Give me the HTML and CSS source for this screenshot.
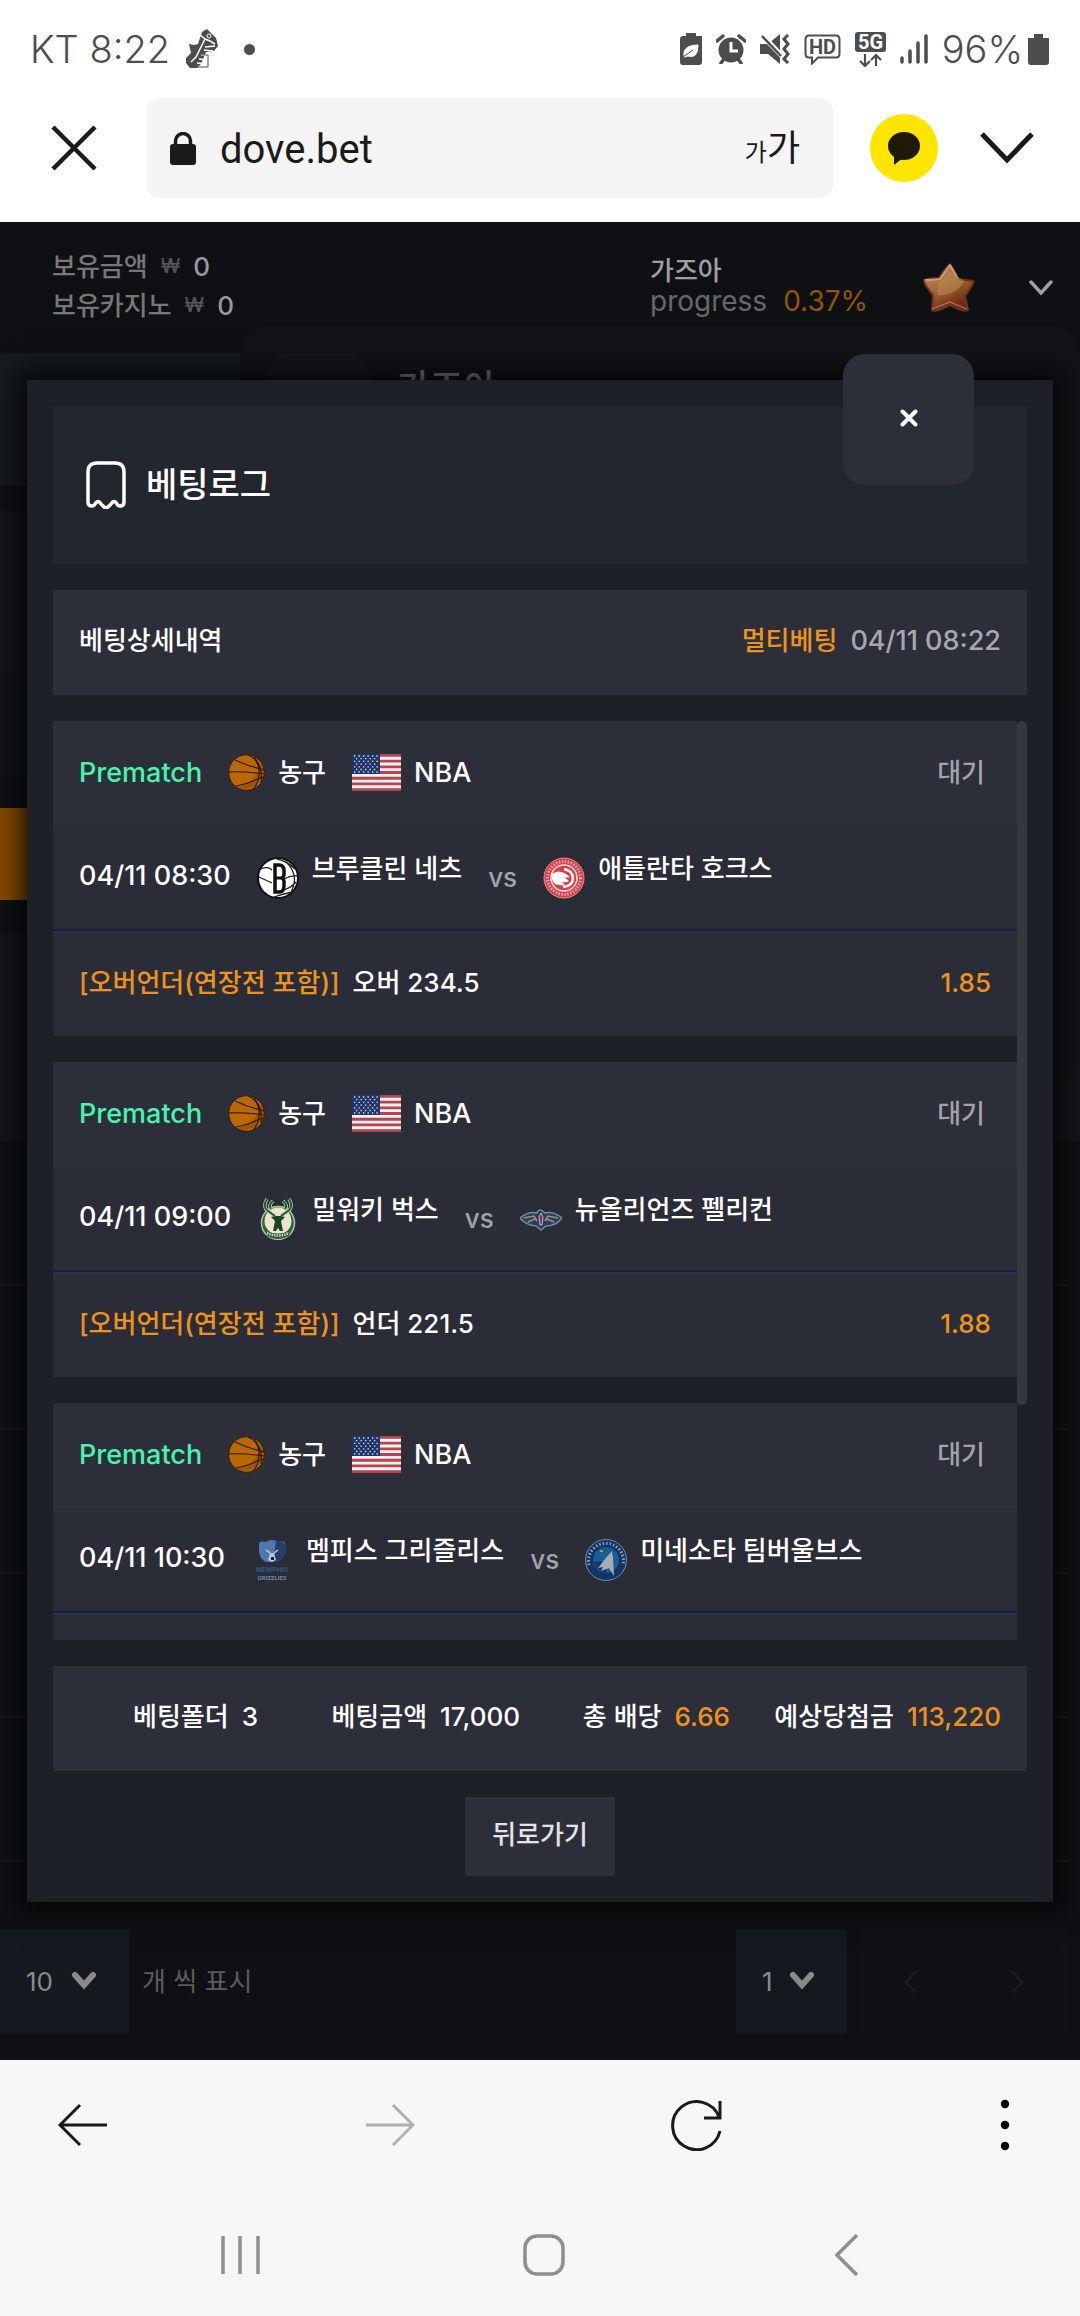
FILE: index.html
```html
<!DOCTYPE html>
<html lang="ko">
<head>
<meta charset="utf-8">
<meta name="viewport" content="width=device-width, initial-scale=1">
<title>베팅로그</title>
<link rel="stylesheet" href="styles.css">
</head>
<body>
<svg class="sprite" aria-hidden="true">
  <symbol id="ball" viewBox="0 0 37 37">
    <circle cx="18.500" cy="18.500" r="17.800" fill="#b96804" stroke="#3b1d00"/>
    <path d="M33 9A18 18 0 0 1 9 33C20 31 30 24 33 9Z" fill="#8f4c04" opacity=".65"/>
    <path d="M1 18Q16 17 36 20M7 6Q20 12 33 15Q37 16 36 17M8 32Q22 29 27 26Q31 24 36 23M20 1Q32 6 31 20Q31 29 25 35M26 3Q35 13 33 28" fill="none" stroke="#2c1500" stroke-width="1.100"/>
  </symbol>
  <symbol id="usa" viewBox="0 0 49 37" preserveAspectRatio="none">
    <path fill="#f5f0f2" d="M0 0h49v37H0z"/>
    <path stroke="#b6444c" stroke-width="2.850" d="M0 1.400h49M0 7.100h49M0 12.800h49M0 18.500h49M0 24.200h49M0 29.900h49M0 35.600h49"/>
    <path fill="#1f356b" d="M0 0h28v20H0z"/>
    <path stroke="#dfe6f5" stroke-width="1.300" stroke-dasharray="1.300 3.200" d="M2 2h25M4 4.700h22M2 7.400h25M4 10.100h22M2 12.800h25M4 15.500h22M2 18h25"/>
  </symbol>
  <symbol id="thick-chevron" viewBox="0 0 26 19">
    <path d="M4 4l9 10 9-10" fill="none" stroke="#8a8a8b" stroke-width="6" stroke-linecap="round"/>
  </symbol>
</svg>

<header class="status">
  <span>KT 8:22</span>
  <svg class="shoe" width="32" height="40" viewBox="0 0 32 40"><path d="M16 3l5-3 9 9 2 8-4 5-8 1-5 12-4 4H4L0 34v-5l5-5-2-9 5 1 4-1z" fill="#4d4d4d"/><path d="M13 5l6 5-9 18-5 5M19 10l5 2 5 3M19 18l10-1M18 21l9 1M15 26l8 1M13 30l9 1M11 34l11 1" stroke="#fff" stroke-width="1.500" fill="none"/><path d="M15 26h7v12H8" stroke="#4d4d4d" fill="none"/><circle cx="23" cy="7" r="2" fill="none" stroke="#fff"/></svg>
  <i class="dot"></i>
  <div class="status-icons">
    <svg width="22" height="32" viewBox="0 0 22 32"><path d="M6 0h10v3h6v26q0 3-3 3H3q-3 0-3-3V6q0-3 3-3h3z" fill="#4d4d4d"/><path d="M4 24V19q2-7 14-7 0 14-10 11zM4 24l10-8" fill="#fff" stroke="#fff"/><path d="M3 24l10-7" stroke="#4d4d4d"/></svg>
    <svg width="30" height="30" viewBox="0 0 30 30"><circle cx="15" cy="16" r="12.500" fill="#4d4d4d"/><path d="M1 7l6-5M29 7l-6-5M5 29l3-4M25 29l-3-4" stroke="#4d4d4d" stroke-width="3.500" stroke-linecap="round"/><path d="M15 8v9h7" fill="none" stroke="#fff" stroke-width="3"/></svg>
    <svg width="30" height="30" viewBox="0 0 30 30"><path d="M0 10h8L20 0v30L8 20H0z" fill="#4d4d4d"/><path d="M2 1l20 21" stroke="#fff" stroke-width="5"/><path d="M2 2l19 20" stroke="#4d4d4d" stroke-width="2.500"/><path d="M28 1l-4 4 4 5-4 5 4 5-4 5 4 4" fill="none" stroke="#4d4d4d" stroke-width="3"/></svg>
    <svg width="37" height="31" viewBox="0 0 37 31"><path d="M5 1.500h27q3.500 0 3.500 4v14q0 4-3.500 4H14l-6 6v-6H5q-3.500 0-3.500-4v-14q0-4 3.500-4z" fill="none" stroke="#4d4d4d" stroke-width="2"/><text x="18.500" y="20" text-anchor="middle" class="hd">HD</text></svg>
    <svg width="31" height="35" viewBox="0 0 31 35"><rect width="31" height="20" rx="3" fill="#4d4d4d"/><text x="15.500" y="17" text-anchor="middle" class="g5">5G</text><path d="M10 22v11M5 29l5 5 5-5M21 34V23M16 28l5-5 5 5" fill="none" stroke="#4d4d4d" stroke-width="2.200"/></svg>
    <svg width="28" height="30" viewBox="0 0 28 30"><path d="M2 24v4M10 17v11M18 9v19M26 2v26" stroke="#4d4d4d" stroke-width="3.500" stroke-linecap="round"/></svg>
    <span class="charge">96%<svg width="21" height="31" viewBox="0 0 21 31"><path d="M6 0h9v4h6v24q0 3-3 3H3q-3 0-3-3V4h6z" fill="#4d4d4d"/></svg></span>
  </div>
</header>

<nav class="browser">
  <button class="plain" aria-label="닫기"><svg width="46" height="46" viewBox="0 0 46 46"><path d="M2 2l42 42M44 2L2 44" stroke="#1a1a1a" stroke-width="4.500"/></svg></button>
  <label class="address">
    <svg width="26" height="33" viewBox="0 0 26 33"><rect y="12" width="26" height="21" rx="3" fill="#1a1a1a"/><path d="M5.500 14V9a7.500 7.500 0 0 1 15 0v5" fill="none" stroke="#1a1a1a" stroke-width="3.500"/></svg>
    <input type="text" value="dove.bet" aria-label="주소">
    <span class="textsize"><small>가</small>가</span>
  </label>
  <button class="kakao" aria-label="카카오톡"><svg width="32" height="33" viewBox="0 0 32 33"><ellipse cx="16" cy="14" rx="16" ry="14" fill="#1e1a00"/><path d="M6 22v11l9-7z" fill="#1e1a00"/></svg></button>
  <button class="plain" aria-label="접기"><svg width="54" height="32" viewBox="0 0 54 32"><path d="M2 2l25 26L52 2" fill="none" stroke="#1a1a1a" stroke-width="5"/></svg></button>
</nav>

<main class="stage">
  <div class="site">
    <header class="account">
      <div class="balances">
        <div><span>보유금액</span><span class="won">₩</span><b>0</b></div>
        <div><span>보유카지노</span><span class="won">₩</span><b>0</b></div>
      </div>
      <div class="level">
        <div>가즈아</div>
        <div class="progress"><span>progress</span><em>0.37%</em></div>
      </div>
      <svg class="star" width="52" height="50" viewBox="0 0 52 50"><defs><linearGradient id="sg" x2=".5" y2="1"><stop stop-color="#c49a5e"/><stop offset=".5" stop-color="#a46a3c"/><stop offset="1" stop-color="#6b2710"/></linearGradient></defs><path d="M27 2q2 0 8 14l15 2q2 1-8 15l3 14q-2 3-18-5-14 8-18 5l1-15Q0 20 1 17q6-2 15-2Q24 2 27 2z" fill="url(#sg)" stroke="#74311a" stroke-width="2"/><path d="M2 17q9 0 15-1L27 2l8 14" fill="none" stroke="#c5a07b" stroke-width="2"/><path d="M9 46l18-7 17 7" fill="none" stroke="#b8836a"/><path d="M14 32q18 2 27-14L27 9 15 20z" fill="#b98b50" opacity=".6"/></svg>
      <svg width="24" height="16" viewBox="0 0 24 16"><path d="M2 2l10 11L22 2" fill="none" stroke="#a0a0a0" stroke-width="3.500" stroke-linecap="round"/></svg>
    </header>
    <div class="band teal"></div>
    <div class="band panel upper"></div>
    <div class="band active"></div>
    <div class="band panel lower"></div>
    <div class="records"><i></i><i></i><i></i><i></i><i></i></div>
    <footer class="pager">
      <label class="pick"><select class="wide"><option>10</option></select><svg width="26" height="19"><use href="#thick-chevron"/></svg></label>
      <span class="per">개 씩 표시</span>
      <label class="pick"><select class="narrow" aria-label="페이지"><option>1</option></select><svg width="26" height="19"><use href="#thick-chevron"/></svg></label>
      <div class="steps">
        <button class="plain" aria-label="이전"><svg width="14" height="24" viewBox="0 0 14 24"><path d="M12 2L3 12l9 10" fill="none" stroke="#1c1c1f" stroke-width="3" stroke-linecap="round"/></svg></button>
        <button class="plain" aria-label="다음"><svg width="14" height="24" viewBox="0 0 14 24"><path d="M2 2l9 10-9 10" fill="none" stroke="#1c1c1f" stroke-width="3" stroke-linecap="round"/></svg></button>
      </div>
    </footer>
    <div class="drawer tall"></div>
    <div class="drawer"><span class="avatar"></span><span class="who">가즈아</span></div>
  </div>

  <section class="modal" role="dialog" aria-labelledby="title">
    <button class="close" aria-label="닫기"><svg width="18" height="18" viewBox="0 0 18 18"><path d="M2.500 2.500l13 13M15.500 2.500l-13 13" stroke="#fff" stroke-width="4" stroke-linecap="round"/></svg></button>
    <header class="title">
      <svg width="40" height="48" viewBox="0 0 40 48"><path d="M2 11q0-9 9-9h18q9 0 9 9v30q0 4-4 4-2 0-3-2-3-5-6 0l-3 3q-2 1-4 0l-3-3q-3-5-6 0-1 2-3 2-4 0-4-4z" fill="none" stroke="#fff" stroke-width="3.500"/></svg>
      <h1 id="title">베팅로그</h1>
    </header>
    <div class="bar detail"><span>베팅상세내역</span><span class="pair"><span class="hot">멀티베팅</span><time>04/11 08:22</time></span></div>

    <div class="scroller">
      <ul class="bets">
        <li>
          <div class="row league"><span class="pre">Prematch</span><span class="pair"><svg width="37" height="37"><use href="#ball"/></svg>농구</span><span class="pair"><svg width="49" height="37"><use href="#usa"/></svg><span class="name">NBA</span></span><span class="wait">대기</span></div>
          <div class="row match"><time>04/11 08:30</time>
            <span class="team"><svg width="42" height="42" viewBox="0 0 42 42"><circle cx="21" cy="21" r="20" fill="#fff" stroke="#111" stroke-width="2"/><path d="M2 20l13 6M4 12q7-3 11 1M20 2q10 2 18 10M28 4q16 14 5 33M27 22q7-4 14-3M27 33q8-3 12-8M17 40q9-3 18-5" fill="none" stroke="#222" stroke-width="1.300"/><path d="M18 8h4q5 0 5 6v3q0 3-2 4 2 1 2 4v4q0 6-5 6h-4z" fill="#fff" stroke="#111" stroke-width="3.500"/><path d="M18 21h7" stroke="#111" stroke-width="3"/></svg>브루클린 네츠</span><span class="vs">vs</span>
            <span class="team"><svg width="42" height="42" viewBox="0 0 42 42"><circle cx="21" cy="21" r="20" fill="#d7404b" stroke="#e98c92"/><circle cx="21" cy="21" r="16.500" fill="none" stroke="#efa4a8" stroke-width="3" stroke-dasharray="1.500 1.500"/><circle cx="21" cy="21" r="13" fill="#d7404b" stroke="#f5dede" stroke-width="1.500"/><path d="M9 17q7-5 14 0l4 3q-3 1-6 0l5 4q-3 2-7 1l3 3q-8 1-11-2-3-4-2-9z" fill="#fff"/><path d="M21 12q9 2 9 9 0 8-10 9" fill="none" stroke="#fff" stroke-width="2.500"/></svg>애틀란타 호크스</span>
          </div>
          <div class="row market"><span class="hot">[오버언더(연장전 포함)]</span><span>오버 234.5</span><span class="odds">1.85</span></div>
        </li>
        <li>
          <div class="row league"><span class="pre">Prematch</span><span class="pair"><svg width="37" height="37"><use href="#ball"/></svg>농구</span><span class="pair"><svg width="49" height="37"><use href="#usa"/></svg><span class="name">NBA</span></span><span class="wait">대기</span></div>
          <div class="row match"><time>04/11 09:00</time>
            <span class="team"><svg width="42" height="42" viewBox="0 0 42 42"><circle cx="21" cy="25" r="16.500" fill="#31613d" stroke="#b9c3a6" stroke-width="1.500"/><circle cx="21" cy="23" r="13.500" fill="#ece5c9"/><path d="M8 32q13 7 26 0l-2 6q-11 6-22 0z" fill="#31613d"/><path d="M10 35q11 5 22 0" fill="none" stroke="#cbd2b5" stroke-width="2.500" stroke-dasharray="1.500 1"/><path d="M10 1q-5 8 1 12l7 5M32 1q5 8-1 12l-7 5M16 3q-5 4-2 8M26 3q5 4 2 8" fill="none" stroke="#c7d0b4" stroke-width="3.500"/><path d="M10 1q-5 8 1 12l7 5M32 1q5 8-1 12l-7 5M16 3q-5 4-2 8M26 3q5 4 2 8" fill="none" stroke="#1f5b33" stroke-width="2"/><path d="M14 19l5-1h4l5 1-4 4 1 5 1 5h-3l-2-3-2 3h-3l1-5 1-5z" fill="#174425"/></svg>밀워키 벅스</span><span class="vs">vs</span>
            <span class="team"><svg width="42" height="42" viewBox="0 0 42 42"><path d="M0 20q9-7 17-5 2-6 8 0 8-2 17 5-6 8-16 8l-5 4-5-4Q6 27 0 20z" fill="#243f6b" stroke="#7e8790" stroke-width="1.500"/><path d="M4 20l10-2 3 5M38 20l-10-2-3 5M8 24l7-3M34 24l-7-3" fill="none" stroke="#a9926a" stroke-width="1.500"/><path d="M21 15l2 4-1 8h-2l-1-8z" fill="#9b2844" stroke="#b9b9bd"/></svg>뉴올리언즈 펠리컨</span>
          </div>
          <div class="row market"><span class="hot">[오버언더(연장전 포함)]</span><span>언더 221.5</span><span class="odds">1.88</span></div>
        </li>
        <li>
          <div class="row league"><span class="pre">Prematch</span><span class="pair"><svg width="37" height="37"><use href="#ball"/></svg>농구</span><span class="pair"><svg width="49" height="37"><use href="#usa"/></svg><span class="name">NBA</span></span><span class="wait">대기</span></div>
          <div class="row match"><time>04/11 10:30</time>
            <span class="team"><svg width="42" height="42" viewBox="0 0 42 42"><path d="M8 7q-1-6 6-4 8-4 14 0 7-2 6 4l1 7q-3 4-8 9H15Q9 20 8 13z" fill="#4f77ad"/><path d="M25 2q10 0 9 6l1 6q-3 4-8 9h-5z" fill="#243f6e"/><path d="M15 11l4 3M27 11l-4 3" stroke="#e0d08a" stroke-width="1.500"/><path d="M19 14h4l2 7-4 2-4-2z" fill="#b7c7dc"/><path d="M20 18h3v3h-3z" fill="#16233d"/><text x="21" y="33" text-anchor="middle" class="bear">MEMPHIS</text><text x="21" y="41" text-anchor="middle" class="bear small">GRIZZLIES</text></svg>멤피스 그리즐리스</span><span class="vs">vs</span>
            <span class="team"><svg width="42" height="42" viewBox="0 0 42 42"><circle cx="21" cy="21" r="20.500" fill="#123466" stroke="#7d8b9e"/><path d="M4 26A17.500 17.500 0 1 1 38 26" fill="none" stroke="#9fb0c6" stroke-width="3" stroke-dasharray="1.500 2" opacity=".9"/><circle cx="21" cy="21" r="14" fill="#1b5c93" stroke="#123466" stroke-width="2"/><path d="M8 23q8 12 13 11V22z" fill="#123466"/><path d="M27 12l1 8 1 17-5-8-8 3 2-4-5 1 7-9z" fill="#a6adb5"/><path d="M15 12h3" stroke="#6fb33f" stroke-width="2"/></svg>미네소타 팀버울브스</span>
          </div>
          <div class="row market"></div>
        </li>
      </ul>
      <div class="track"><div class="thumb"></div></div>
    </div>

    <dl class="bar summary">
      <div><dt>베팅폴더</dt><dd>3</dd></div>
      <div><dt>베팅금액</dt><dd>17,000</dd></div>
      <div><dt>총 배당</dt><dd class="hot">6.66</dd></div>
      <div><dt>예상당첨금</dt><dd class="hot">113,220</dd></div>
    </dl>
    <button class="back">뒤로가기</button>
  </section>
</main>

<nav class="tools">
  <button class="plain" aria-label="뒤로"><svg width="50" height="44" viewBox="0 0 50 44"><path d="M49 22H3M22 2L2 22l20 20" fill="none" stroke="#1a1a1a" stroke-width="3"/></svg></button>
  <button class="plain" aria-label="앞으로"><svg width="50" height="44" viewBox="0 0 50 44"><path d="M1 22h46M28 2l20 20-20 20" fill="none" stroke="#b0b0b0" stroke-width="3"/></svg></button>
  <button class="plain" aria-label="새로고침"><svg width="52" height="52" viewBox="0 0 52 52"><path d="M48 18A24 24 0 1 0 49 32M49 2v17H33" fill="none" stroke="#1a1a1a" stroke-width="3"/></svg></button>
  <button class="plain" aria-label="더보기"><svg width="50" height="52" viewBox="0 0 50 52"><circle cx="25" cy="5" r="4.200"/><circle cx="25" cy="26" r="4.200"/><circle cx="25" cy="47" r="4.200"/></svg></button>
</nav>
<nav class="system">
  <button class="plain" aria-label="최근 앱"><svg width="42" height="42" viewBox="0 0 42 42"><path d="M3 2v38M20 2v38M38 2v38" stroke="#8e8e8e" stroke-width="3.500"/></svg></button>
  <button class="plain" aria-label="홈"><svg width="42" height="42" viewBox="0 0 42 42"><rect x="2" y="2" width="38" height="38" rx="12" fill="none" stroke="#8e8e8e" stroke-width="3.500"/></svg></button>
  <button class="plain" aria-label="이전"><svg width="42" height="42" viewBox="0 0 42 42"><path d="M31 1L11 21l20 20" fill="none" stroke="#8e8e8e" stroke-width="3.500"/></svg></button>
</nav>
</body>
</html>
```
FILE: styles.css
```css
* { box-sizing: border-box; }
body {
  margin: 0;
  background: #fff;
  color: #fff;
  font: 26px/36px Inter, "Noto Sans CJK KR", sans-serif;
}
svg { display: block; flex: none; }
button, input, select { font: inherit; color: inherit; border: 0; margin: 0; }
.plain { background: none; padding: 0; }
.sprite { position: absolute; width: 0; height: 0; }

/* phone status bar */
.status {
  display: flex;
  align-items: center;
  height: 98px;
  padding: 0 31px 0 30px;
  color: #4d4d4d;
  font: 300 38px/48px Inter, sans-serif;
}
.shoe { margin: 0 26px 0 16px; }
.dot { width: 11px; height: 11px; border-radius: 50%; background: #4d4d4d; }
.status-icons { display: flex; align-items: center; gap: 14px; margin-left: auto; }
.charge { display: flex; align-items: center; gap: 5px; }
.hd, .g5 { font: 700 20px Roboto, sans-serif; fill: #4d4d4d; }
.g5 { fill: #fff; }

/* in-app browser bar */
.browser {
  display: flex;
  align-items: center;
  height: 124px;
  padding: 0 46px 24px 51px;
}
.address {
  flex: 1;
  display: flex;
  align-items: center;
  height: 100px;
  margin: 0 37px 0 50px;
  padding: 0 33px 0 23px;
  border-radius: 13px;
  background: #f4f4f4;
  color: #1a1a1a;
}
.address input {
  flex: 1;
  min-width: 0;
  padding: 4px 0 0 24px;
  background: none;
  font: 40px/48px Roboto, sans-serif;
}
.textsize { padding-top: 4px; font-size: 36px; line-height: 40px; }
.textsize small { font-size: 24px; }
.kakao {
  display: grid;
  place-items: center;
  width: 68px;
  height: 68px;
  margin-right: 42px;
  padding: 0;
  border-radius: 50%;
  background: #fee500;
}

/* dimmed site and the dialog share one cell */
.stage { display: grid; background: #0f1013; }
.site, .modal { grid-area: 1 / 1; min-width: 0; }
.site { position: relative; padding-bottom: 26px; overflow: hidden; }
.account {
  display: flex;
  align-items: center;
  height: 131px;
  padding: 0 27px 0 52px;
  color: #777;
  font-weight: 500;
}
.balances { line-height: 39px; margin-right: auto; padding-bottom: 4px; }
.balances div { display: flex; gap: 13px; }
.balances .won { font-size: 20px; color: #555; }
.balances b { font-weight: 500; color: #999; }
.level { width: 273px; padding-bottom: 4px; line-height: 31px; color: #a0a0a0; }
.progress { display: flex; gap: 16px; font-size: 28px; font-weight: 400; color: #68686a; }
.progress em { font-style: normal; color: #945408; }
.star { margin-right: 54px; }
.band.teal { height: 132px; background: #161b1f; }
.band.panel { background: #151619; }
.band.upper { height: 264px; margin-top: 26px; border-bottom: 106px solid #141518; }
.band.active { height: 92px; margin: 33px 0; background: #8b4c00; }
.band.lower { height: 209px; }
.records { margin-right: 10px; background: #101114; }
.records i { display: block; height: 144px; border-bottom: 2px solid #17181b; }
.pager { display: flex; align-items: center; margin-top: 67px; padding-right: 10px; }
.pick { position: relative; color: #8a8a8b; }
.pick select {
  display: block;
  height: 105px;
  padding: 0 26px;
  appearance: none;
  border-radius: 0;
  background: #13191f;
}
.pick .wide { width: 129px; }
.pick .narrow { width: 111px; }
.pick svg { position: absolute; top: 42px; right: 32px; pointer-events: none; }
.per { margin: 0 auto 0 13px; color: #5c5c5d; }
.steps {
  display: flex;
  align-items: center;
  justify-content: space-between;
  width: 212px;
  height: 105px;
  margin-left: 11px;
  padding: 0 45px;
  background: #101114;
}
.drawer {
  position: absolute;
  top: 105px;
  left: 240px;
  right: 0;
  height: 392px;
  padding: 26px;
  display: flex;
  gap: 26px;
  border-radius: 26px;
  background: #121316;
}
.drawer.tall { height: 758px; background: #141518; }
.avatar { width: 105px; height: 105px; border-radius: 22px; background: #15161a; }
.who { font-size: 36px; line-height: 70px; font-weight: 500; color: #777; }

/* dialog */
.modal {
  position: relative;
  align-self: start;
  display: flex;
  flex-direction: column;
  gap: 26px;
  margin: 158px 27px 0;
  padding: 26px;
  background: #1e2027;
  box-shadow: 0 0 26px 8px rgba(0, 0, 0, .75);
  font-weight: 500;
}
.close {
  position: absolute;
  top: -26px;
  right: 79px;
  display: grid;
  place-items: center;
  width: 131px;
  height: 131px;
  padding: 0 0 4px;
  border-radius: 22px;
  background: #2c2f39;
}
.title {
  display: flex;
  align-items: center;
  gap: 20px;
  height: 158px;
  padding: 0 33px;
  background: #22262e;
}
.title h1 { margin: 0; font-size: 34px; line-height: 44px; font-weight: 500; }
.bar, .row {
  display: flex;
  align-items: center;
  height: 105px;
  padding: 0 26px 4px;
  background: #2c2f39;
}
.detail { justify-content: space-between; }
.pair { display: flex; align-items: center; gap: 13px; }
.hot, .odds { color: #ee921e; }
time { font-size: 27px; }
.detail time { color: #a7a8ad; }
.scroller { display: flex; height: 919px; overflow: hidden; }
.bets {
  flex: 1;
  display: flex;
  flex-direction: column;
  gap: 26px;
  margin: 0;
  padding: 0;
  list-style: none;
}
.row { gap: 26px; }
.league { padding-bottom: 2px; }
.pre, .name { font-size: 27px; }
.pre { color: #4af2ac; }
.wait { margin-left: auto; padding-right: 6px; color: #a2a3a7; }
.match, .market { background: #2a2d37; }
.match { padding-bottom: 0; border-bottom: 2px solid #1a2238; }
.match time { padding-bottom: 4px; }
.team { display: flex; align-items: flex-start; gap: 13px; line-height: 24px; }
.vs { color: #a2a3a7; }
.bear { font: 700 7px Roboto, sans-serif; fill: #33558a; }
.bear.small { font-size: 6px; fill: #6d86a8; }
.market { gap: 13px; border-top: 2px solid #27324e; }
.odds { margin-left: auto; }
.track { width: 10px; }
.thumb { height: 684px; border-radius: 5px; background: #36383f; }
.summary {
  display: grid;
  grid-template-columns: 179fr 262fr 210fr 271fr;
  margin: 0;
}
.summary div { display: flex; justify-content: flex-end; gap: 13px; }
.summary dd { margin: 0; }
.back {
  align-self: center;
  height: 79px;
  padding: 0 27px 4px;
  background: #2c2f39;
  color: #e4e4e6;
}

/* bottom bars */
.tools {
  display: flex;
  align-items: center;
  justify-content: space-between;
  height: 130px;
  padding: 0 50px 0 58px;
  background: #f7f7f7;
}
.system {
  display: flex;
  align-items: center;
  justify-content: space-between;
  height: 126px;
  padding: 4px 212px 0 220px;
  background: #f5f6f8;
}
```
